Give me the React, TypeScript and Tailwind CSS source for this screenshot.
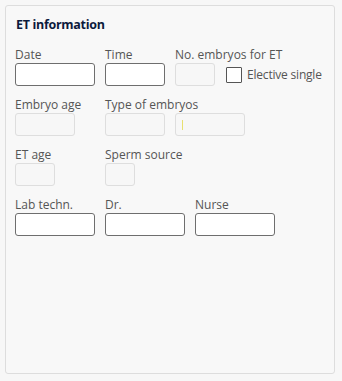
import React from 'react';

const font = { fontFamily: '"Open Sans", "Noto Sans", Arial, sans-serif' };

function Label({ text }: { text: string }) {
  return (
    <div className="h-[17px] text-[12px] leading-[17px] text-[#555] whitespace-nowrap">
      {text}
    </div>
  );
}

function Input({ width, disabled }: { width: string; disabled?: boolean }) {
  return (
    <div
      className={
        disabled
          ? `${width} h-[23px] rounded-[3px] border border-[#dedede] bg-[#f7f7f7]`
          : `${width} h-[23px] rounded-[3px] border border-[#6e6e6e] bg-white`
      }
    />
  );
}

export default function App() {
  return (
    <div className="w-[342px] h-[381px] bg-[#f7f7f7] pt-[5px] pl-[5px]" style={font}>
      <div className="w-[330px] h-[369px] rounded-[3px] border border-[#dddddd] bg-[#f8f8f8] px-[9px] pt-[9px]">
        <div className="h-[20px] text-[12.5px] leading-[20px] font-bold tracking-[-0.3px] text-[#0c1a3c] pl-[1px]">
          ET information
        </div>

        <div className="mt-[11px] flex flex-col gap-[10px]">
          {/* row 1 */}
          <div className="flex">
            <div className="w-[90px]">
              <Label text="Date" />
              <Input width="w-[80px]" />
            </div>
            <div className="w-[70px]">
              <Label text="Time" />
              <Input width="w-[60px]" />
            </div>
            <div>
              <Label text="No. embryos for ET" />
              <div className="flex items-center">
                <Input width="w-[40px]" disabled />
                <div className="ml-[11px] w-[16px] h-[16px] border border-[#555] bg-white rounded-[1px]" />
                <span className="ml-[5px] text-[12px] leading-[17px] tracking-[-0.2px] text-[#555]">Elective single</span>
              </div>
            </div>
          </div>

          {/* row 2 */}
          <div className="flex">
            <div className="w-[90px]">
              <Label text="Embryo age" />
              <Input width="w-[60px]" disabled />
            </div>
            <div>
              <Label text="Type of embryos" />
              <div className="flex gap-[10px]">
                <Input width="w-[60px]" disabled />
                <div className="w-[70px] h-[23px] rounded-[3px] border border-[#dedede] bg-[#f7f7f7] pl-[6px] pt-[6px]">
                  <div className="w-[1px] h-[10px] bg-[#e8e070]" />
                </div>
              </div>
            </div>
          </div>

          {/* row 3 */}
          <div className="flex">
            <div className="w-[90px]">
              <Label text="ET age" />
              <Input width="w-[40px]" disabled />
            </div>
            <div>
              <Label text="Sperm source" />
              <Input width="w-[30px]" disabled />
            </div>
          </div>

          {/* row 4 */}
          <div className="flex">
            <div className="w-[90px]">
              <Label text="Lab techn." />
              <Input width="w-[80px]" />
            </div>
            <div className="w-[90px]">
              <Label text="Dr." />
              <Input width="w-[80px]" />
            </div>
            <div>
              <Label text="Nurse" />
              <Input width="w-[80px]" />
            </div>
          </div>
        </div>
      </div>
    </div>
  );
}
